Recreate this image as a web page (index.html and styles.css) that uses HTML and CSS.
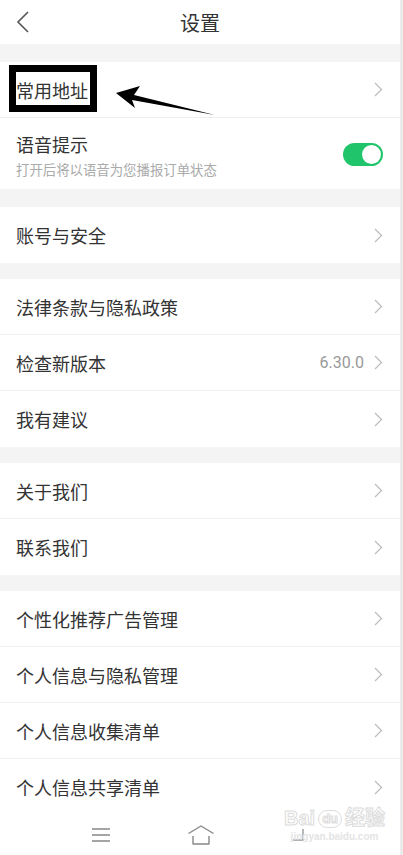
FILE: index.html
```html
<!DOCTYPE html>
<html lang="zh-CN">
<head>
  <meta charset="UTF-8" />
  <title>设置</title>
  <meta name="viewport" content="width=device-width, initial-scale=1.0" />
  <link rel="stylesheet" href="styles.css">
</head>
<body>
  <div class="page">
    <div class="topbar">
      <svg class="back" width="14" height="22" viewBox="0 0 14 22">
        <polyline points="12,1 2,11 12,21" fill="none" stroke="#555" stroke-width="1.6" />
      </svg>
      <h1>设置</h1>
    </div>

    <div class="group group-top">
      <div class="row">
        <span class="label">常用地址</span>
        <svg class="chev" width="9" height="15" viewBox="0 0 9 15"><polyline points="1,1 7.5,7.5 1,14" /></svg>
      </div>
      <div class="row row-tall">
        <div>
          <div class="label">语音提示</div>
          <div class="hint">打开后将以语音为您播报订单状态</div>
        </div>
        <span class="switch"><span class="knob"></span></span>
      </div>
    </div>

    <div class="group group-top">
      <div class="row">
        <span class="label">账号与安全</span>
        <svg class="chev" width="9" height="15" viewBox="0 0 9 15"><polyline points="1,1 7.5,7.5 1,14" /></svg>
      </div>
    </div>

    <div class="group">
      <div class="row">
        <span class="label">法律条款与隐私政策</span>
        <svg class="chev" width="9" height="15" viewBox="0 0 9 15"><polyline points="1,1 7.5,7.5 1,14" /></svg>
      </div>
      <div class="row">
        <span class="label">检查新版本</span>
        <span class="right">
          <span class="value">6.30.0</span>
          <svg class="chev" width="9" height="15" viewBox="0 0 9 15"><polyline points="1,1 7.5,7.5 1,14" /></svg>
        </span>
      </div>
      <div class="row">
        <span class="label">我有建议</span>
        <svg class="chev" width="9" height="15" viewBox="0 0 9 15"><polyline points="1,1 7.5,7.5 1,14" /></svg>
      </div>
    </div>

    <div class="group">
      <div class="row">
        <span class="label">关于我们</span>
        <svg class="chev" width="9" height="15" viewBox="0 0 9 15"><polyline points="1,1 7.5,7.5 1,14" /></svg>
      </div>
      <div class="row">
        <span class="label">联系我们</span>
        <svg class="chev" width="9" height="15" viewBox="0 0 9 15"><polyline points="1,1 7.5,7.5 1,14" /></svg>
      </div>
    </div>

    <div class="group">
      <div class="row">
        <span class="label">个性化推荐广告管理</span>
        <svg class="chev" width="9" height="15" viewBox="0 0 9 15"><polyline points="1,1 7.5,7.5 1,14" /></svg>
      </div>
      <div class="row">
        <span class="label">个人信息与隐私管理</span>
        <svg class="chev" width="9" height="15" viewBox="0 0 9 15"><polyline points="1,1 7.5,7.5 1,14" /></svg>
      </div>
      <div class="row">
        <span class="label">个人信息收集清单</span>
        <svg class="chev" width="9" height="15" viewBox="0 0 9 15"><polyline points="1,1 7.5,7.5 1,14" /></svg>
      </div>
      <div class="row">
        <span class="label">个人信息共享清单</span>
        <svg class="chev" width="9" height="15" viewBox="0 0 9 15"><polyline points="1,1 7.5,7.5 1,14" /></svg>
      </div>
    </div>

    <div class="navbar">
      <svg width="20" height="16" viewBox="0 0 20 16">
        <path d="M1 2H19M1 8H19M1 14H19" stroke="#888" stroke-width="1.4" fill="none" />
      </svg>
      <svg width="28" height="22" viewBox="0 0 28 22">
        <path d="M1.5 9.5L14 2L26.5 9.5M6 12V20H22V12" stroke="#888" stroke-width="1.4" fill="none" stroke-linejoin="round" />
      </svg>
      <svg width="16" height="16" viewBox="0 0 16 16">
        <path d="M12 2V13H2" stroke="#999" stroke-width="1.4" fill="none" />
      </svg>
    </div>

    <!-- annotation drawn on the screenshot -->
    <div class="mark-box"></div>
    <svg class="mark-arrow" width="403" height="130" viewBox="0 0 403 130">
      <polygon points="116,93 140,86 134,95 215,115 132,100 135,108" fill="#000" />
    </svg>

    <div class="watermark">
      <div class="wm-logo">Bai<span class="wm-du">du</span>经验</div>
      <div class="wm-url">jingyan.baidu.com</div>
    </div>
  </div>
</body>
</html>
```

FILE: styles.css
```css
* {
  box-sizing: border-box;
}

body {
  margin: 0;
  font-family: Roboto, "Noto Sans CJK SC", sans-serif;
  color: #333;
  background: #fff;
}

.page {
  position: relative;
  width: 403px;
  height: 855px;
  overflow: hidden;
  background: #f4f4f4;
  border-right: 3px solid #ebebeb;
}

.topbar {
  height: 44px;
  background: #fff;
  display: flex;
  align-items: center;
  justify-content: center;
  position: relative;
}

.topbar h1 {
  margin: 0;
  font-size: 20px;
  font-weight: normal;
  color: #333;
  letter-spacing: 0;
}

.topbar .back {
  position: absolute;
  left: 16px;
  top: 11px;
}

.group {
  margin-top: 16px;
  background: #fff;
}

.group-top {
  margin-top: 18px;
}

.row {
  height: 56px;
  display: flex;
  align-items: center;
  justify-content: space-between;
  padding: 0 17px 0 16px;
  border-bottom: 1px solid #efefef;
}

.row:last-child {
  border-bottom: none;
}

.row-tall {
  height: 71px;
  padding-top: 2px;
}

.label {
  font-size: 18px;
  color: #333;
}

.hint {
  font-size: 13.4px;
  color: #aaa;
  margin-top: 2px;
}

.right {
  display: flex;
  align-items: center;
  gap: 10px;
}

.value {
  font-size: 16px;
  color: #999;
}

.chev polyline {
  fill: none;
  stroke: #bbb;
  stroke-width: 1.2;
}

.switch {
  width: 40px;
  height: 23px;
  border-radius: 12px;
  background: #20c46a;
  display: flex;
  align-items: center;
  justify-content: flex-end;
  padding-right: 2px;
}

.knob {
  width: 19px;
  height: 19px;
  border-radius: 50%;
  background: #fff;
}

.navbar {
  height: 40px;
  background: #fff;
  display: flex;
  align-items: center;
  padding: 0 0 0 91px;
  gap: 76px;
}

.mark-box {
  position: absolute;
  left: 9px;
  top: 65px;
  width: 88px;
  height: 47px;
  border: 7px solid #000;
}

.mark-arrow {
  position: absolute;
  left: 0;
  top: 0;
}

.watermark {
  position: absolute;
  left: 284px;
  top: 806px;
  color: #e2e2e2;
  text-align: center;
  font-family: "Liberation Sans", "Noto Sans CJK SC", sans-serif;
}

.wm-logo {
  font-size: 20px;
  font-weight: bold;
  line-height: 24px;
  color: transparent;
  -webkit-text-stroke: 1px #dcdcdc;
}

.wm-du {
  display: inline-block;
  font-size: 13px;
  border: 1px solid #dcdcdc;
  border-radius: 10px;
  padding: 0 3px;
  margin: 0 3px;
  line-height: 16px;
  vertical-align: 2px;
}

.wm-url {
  font-size: 10px;
  font-weight: bold;
  color: #e4e4e4;
  line-height: 14px;
}
```
